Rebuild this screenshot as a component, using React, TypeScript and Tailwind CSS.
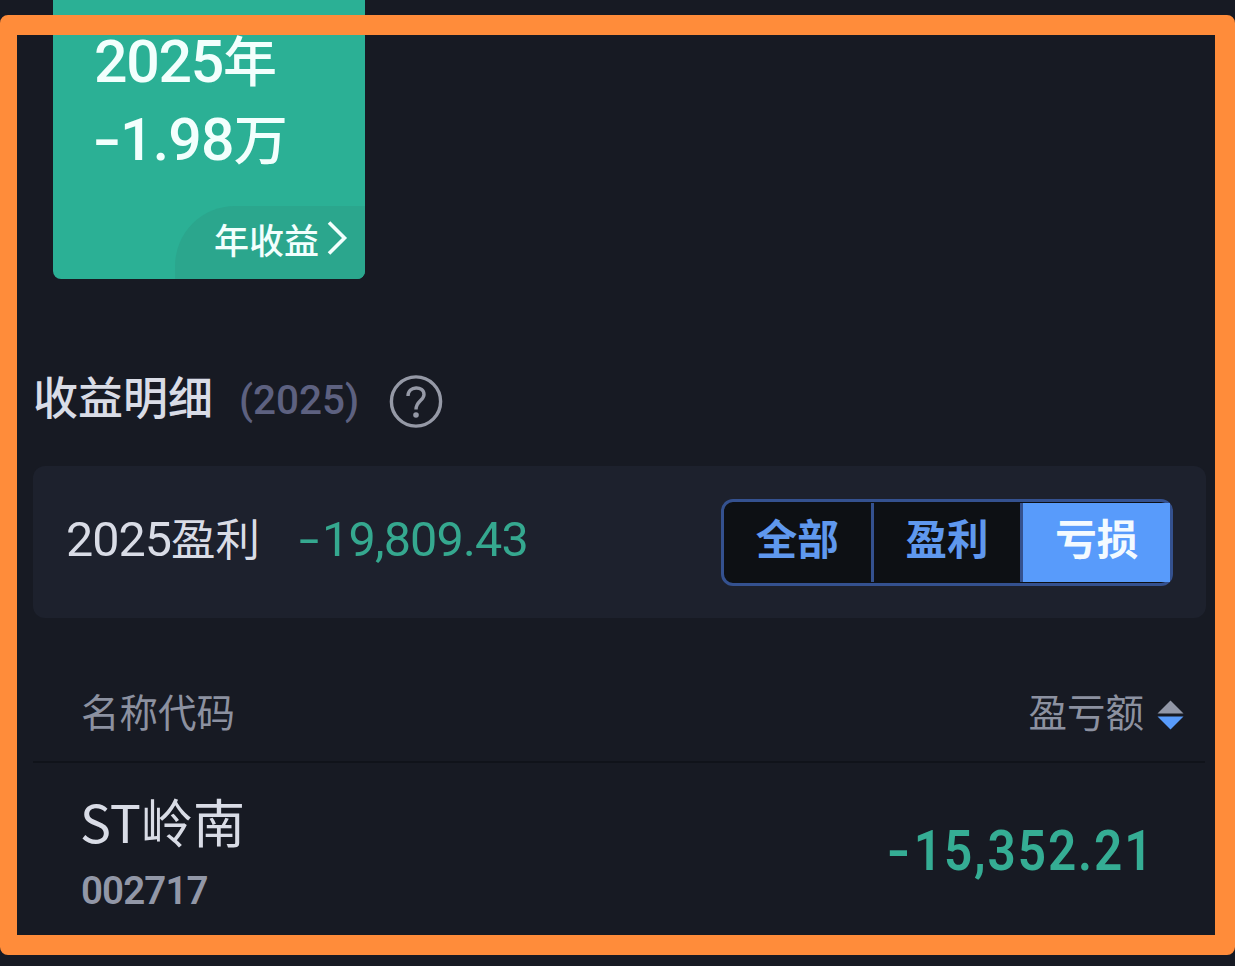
import clsx from 'clsx';
import type { ReactNode } from 'react';

interface NumProps {
    children: ReactNode;
    className?: string;
}

const FILTERS = [
    { label: '全部', active: false },
    { label: '盈利', active: false },
    { label: '亏损', active: true }
];

const HOLDINGS = [{ name: 'ST岭南', code: '002717', amount: '15,352.21' }];

function Num({ children, className }: NumProps) {
    return <span className={clsx("font-['Roboto','Noto_Sans_CJK_SC',sans-serif]", className)}>{children}</span>;
}

function YearCard() {
    return (
        <div className="ml-[53px] w-[312px] h-[279px] shrink-0 flex flex-col rounded-b-lg overflow-hidden bg-[#2bb095] text-[#f2fffd] font-medium">
            <div className="pl-[41px] pt-[19px] h-[97px] whitespace-nowrap text-[54px] leading-[80px]">
                <Num className="text-[59px] tracking-[-1.3px]">2025</Num>年
            </div>
            <div className="pl-[40px] h-[109px] whitespace-nowrap text-[54px] leading-[80px]">
                <Num className="text-[59px] tracking-[-0.8px]">
                    <span className="inline-block origin-left scale-x-[1.4] w-[18px] mr-[9px]">-</span>1.98
                </Num>
                万
            </div>
            <div className="ml-auto w-[190px] h-[73px] pl-[39px] flex items-start rounded-tl-[60px] bg-[#2ba68d]">
                <span className="text-[35px] leading-[65px]">年收益</span>
                <svg width="24" height="38" viewBox="0 0 24 38" fill="none" stroke="currentColor" strokeWidth="3.6" className="mt-[13px] ml-[7px]">
                    <path d="M3 3.5 L18.5 19 L3 34.5" />
                </svg>
            </div>
        </div>
    );
}

function SectionTitle() {
    return (
        <div className="mt-[87px] ml-[33px] h-[70px] flex items-start whitespace-nowrap">
            <h2 className="w-[206px] text-[45px] leading-[60px] font-medium text-[#d9dce6]">收益明细</h2>
            <Num className="w-[150px] text-[40.5px] leading-[68px] text-[#5d6180] font-medium">(2025)</Num>
            <svg width="54" height="54" viewBox="0 0 54 54" fill="none" stroke="#9599a6" strokeWidth="3.4" className="mt-2">
                <circle cx="27" cy="27.5" r="24.6" />
                <path d="M19 22 C19 11.5 35 11.5 35 20.5 C35 26.5 27 27 27 35.5" />
                <circle cx="27" cy="41" r="2.8" fill="#9599a6" stroke="none" />
            </svg>
        </div>
    );
}

function SummaryBar() {
    return (
        <div className="mt-[30px] ml-[33px] w-[1173px] h-[152px] pl-[33px] pr-[33px] flex items-center justify-between rounded-xl bg-[#1d212d]">
            <div className="pb-[7px] flex items-baseline whitespace-nowrap leading-[70px]">
                <div className="w-[233px] text-[44.5px] text-[#d9dce6]">
                    <Num className="text-[48.5px] tracking-[-1px]">2025</Num>盈利
                </div>
                <Num className="text-[48.5px] tracking-[-0.8px] text-[#35a88f]">
                    <span className="inline-block origin-left scale-x-[1.5] w-[14px] mr-[9px]">-</span>19,809.43
                </Num>
            </div>
            <div className="w-[452px] h-[87px] py-px flex rounded-xl border-[3px] border-[#34518f] bg-[#0d1014]">
                {FILTERS.map(({ label, active }) => (
                    <button
                        key={label}
                        className={clsx(
                            'flex-1 pb-2 text-[41.5px] font-bold leading-none border-l-[3px] border-[#34518f] first:border-l-0',
                            active ? 'bg-[#589bfb] text-[#f3faff]' : 'text-[#5f98ee]'
                        )}
                    >
                        {label}
                    </button>
                ))}
            </div>
        </div>
    );
}

function HoldingsTable() {
    return (
        <div className="ml-[33px] w-[1172px]">
            <div className="h-[145px] pt-[64px] pl-12 pr-[21px] flex items-start justify-between border-b-2 border-[#10131a] text-[38.5px] leading-[56px] text-[#8c91a0]">
                <span>名称代码</span>
                <span className="flex items-start">
                    盈亏额
                    <svg width="27" height="30" viewBox="0 0 27 30" className="mt-[18px] ml-[13px]">
                        <path d="M13.5 0.5 L26.5 13.5 H0.5 Z" fill="#9297a7" />
                        <path d="M0.5 16.5 H26.5 L13.5 29.5 Z" fill="#589bfb" />
                    </svg>
                </span>
            </div>
            {HOLDINGS.map((item) => (
                <div key={item.code} className="pt-[19px] pl-[47px] pr-[54px] flex justify-between">
                    <div className="flex flex-col">
                        <span className="text-[52px] leading-[78px] text-[#d9dce6]">{item.name}</span>
                        <Num className="mt-1.5 ml-px text-[38.5px] leading-[50px] font-semibold tracking-[-0.9px] text-[#9297a7]">{item.code}</Num>
                    </div>
                    <Num className="mt-[29px] flex text-[55px] leading-[80px] font-semibold tracking-[2.1px] text-[#35ad94] origin-right scale-x-90 translate-x-[3px]">
                        <span className="origin-left scale-x-[1.3] tracking-normal w-[20px] mr-[10px]">-</span>
                        <span>{item.amount}</span>
                    </Num>
                </div>
            ))}
        </div>
    );
}

export default function App() {
    return (
        <div className="relative w-[1235px] h-[966px] overflow-hidden flex flex-col bg-[#171a23] font-['Noto_Sans_CJK_SC',sans-serif]">
            <YearCard />
            <SectionTitle />
            <SummaryBar />
            <HoldingsTable />

            {/* Highlight frame */}
            <div className="absolute inset-x-0 top-[15px] h-[940px] rounded-lg border-[20px] border-l-[17px] border-[#ff8c3a] pointer-events-none" />
        </div>
    );
}
